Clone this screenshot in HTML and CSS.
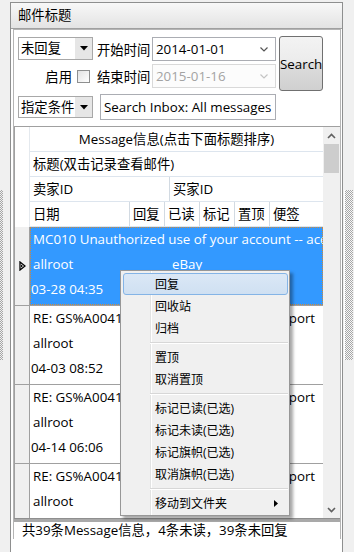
FILE: index.html
```html
<!DOCTYPE html>
<html lang="zh-CN">
<head>
    <meta charset="UTF-8">
    <meta name="viewport" content="width=device-width, initial-scale=1.0">
    <title>邮件标题</title>
    <link rel="stylesheet" href="styles.css">
</head>
<body>
<div class="app">
    <!-- Left splitter -->
    <div class="split split-left"><div class="grip"></div></div>

    <div class="panel">
        <div class="panel-head">邮件标题</div>
        <div class="panel-body">
            <div class="box">
                <!-- Filter controls -->
                <div class="filters">
                    <div class="combo c1">
                        <span class="combo-text">未回复</span>
                        <span class="combo-btn"><svg width="8" height="5" viewBox="0 0 8 5"><polygon points="0,0 8,0 4,4.5" fill="#000"/></svg></span>
                    </div>
                    <div class="label l1">开始时间</div>
                    <div class="date d1">
                        <span>2014-01-01</span>
                        <svg width="8" height="5" viewBox="0 0 8 5"><polyline points="0.5,0.5 4,4 7.5,0.5" fill="none" stroke="#555" stroke-width="1.2"/></svg>
                    </div>
                    <button class="search">Search</button>

                    <div class="enable">启用 <span class="check"></span></div>
                    <div class="label l2">结束时间</div>
                    <div class="date d2 disabled">
                        <span>2015-01-16</span>
                        <svg width="8" height="5" viewBox="0 0 8 5"><polyline points="0.5,0.5 4,4 7.5,0.5" fill="none" stroke="#c4c4c4" stroke-width="1.2"/></svg>
                    </div>

                    <div class="combo c3">
                        <span class="combo-text">指定条件</span>
                        <span class="combo-btn"><svg width="8" height="5" viewBox="0 0 8 5"><polygon points="0,0 8,0 4,4.5" fill="#000"/></svg></span>
                    </div>
                    <div class="textbox">Search Inbox: All messages</div>
                </div>

                <!-- Message grid -->
                <div class="grid">
                    <div class="grid-main">
                        <div class="heads">
                            <div class="corner"></div>
                            <div class="head-rows">
                                <div class="hrow center">Message信息(点击下面标题排序)</div>
                                <div class="hrow"><div class="hc">标题(双击记录查看邮件)</div></div>
                                <div class="hrow">
                                    <div class="hc w140 bar">卖家ID</div>
                                    <div class="hc">买家ID</div>
                                </div>
                                <div class="hrow">
                                    <div class="hc w100 bar">日期</div>
                                    <div class="hc w35 bar">回复</div>
                                    <div class="hc w35 bar">已读</div>
                                    <div class="hc w35 bar">标记</div>
                                    <div class="hc w35 bar">置顶</div>
                                    <div class="hc">便签</div>
                                </div>
                            </div>
                        </div>

                        <div class="rows">
                            <div class="drow">
                                <div class="rh"><svg width="7" height="10" viewBox="0 0 7 10"><polygon points="1,1 6,5 1,9" fill="#fff" stroke="#000" stroke-width="1.3"/><polygon points="2,3.5 4,5 2,6.5" fill="#000"/></svg></div>
                                <div class="dcells selected">
                                    <div class="dline title">MC010 Unauthorized use of your account -- account suspended</div>
                                    <div class="dline"><span class="seller">allroot</span><span class="buyer">eBay</span></div>
                                    <div class="dline date-cell">03-28 04:35</div>
                                </div>
                            </div>
                            <div class="drow">
                                <div class="rh"></div>
                                <div class="dcells">
                                    <div class="dline title">RE: GS%A00413 Messages from eBay Support</div>
                                    <div class="dline"><span class="seller">allroot</span><span class="buyer">eBay</span></div>
                                    <div class="dline date-cell">04-03 08:52</div>
                                </div>
                            </div>
                            <div class="drow">
                                <div class="rh"></div>
                                <div class="dcells">
                                    <div class="dline title">RE: GS%A00418 Messages from eBay Support</div>
                                    <div class="dline"><span class="seller">allroot</span><span class="buyer">eBay</span></div>
                                    <div class="dline date-cell">04-14 06:06</div>
                                </div>
                            </div>
                            <div class="drow">
                                <div class="rh"></div>
                                <div class="dcells">
                                    <div class="dline title">RE: GS%A00415 Messages from eBay Support</div>
                                    <div class="dline"><span class="seller">allroot</span><span class="buyer">eBay</span></div>
                                    <div class="dline date-cell">04-16 11:20</div>
                                </div>
                            </div>
                        </div>
                    </div>

                    <div class="vscroll">
                        <div class="sbtn"><svg width="9" height="6" viewBox="0 0 9 6"><polyline points="1,5 4.5,1.5 8,5" fill="none" stroke="#606060" stroke-width="1.6"/></svg></div>
                        <div class="thumb"></div>
                        <div class="track"></div>
                        <div class="sbtn"><svg width="9" height="6" viewBox="0 0 9 6"><polyline points="1,1 4.5,4.5 8,1" fill="none" stroke="#606060" stroke-width="1.6"/></svg></div>
                    </div>
                </div>

                <div class="hsplit"></div>
                <div class="status">共39条Message信息，4条未读，39条未回复</div>
            </div>
        </div>
    </div>

    <!-- Right splitter -->
    <div class="split split-right"><div class="grip"></div></div>

    <!-- Row context menu -->
    <div class="menu">
        <div class="mi hot">回复</div>
        <div class="mi">回收站</div>
        <div class="mi">归档</div>
        <div class="sep"></div>
        <div class="mi">置顶</div>
        <div class="mi">取消置顶</div>
        <div class="sep"></div>
        <div class="mi">标记已读(已选)</div>
        <div class="mi">标记未读(已选)</div>
        <div class="mi">标记旗帜(已选)</div>
        <div class="mi">取消旗帜(已选)</div>
        <div class="sep"></div>
        <div class="mi sub">移动到文件夹 <svg width="4" height="7" viewBox="0 0 4 7"><polygon points="0,0 4,3.5 0,7" fill="#000"/></svg></div>
    </div>
</div>
</body>
</html>
```

FILE: styles.css
```css
* {
    box-sizing: border-box;
}
body {
    margin: 0;
    font-family: "Open Sans", "Noto Sans CJK SC", sans-serif;
    font-size: 13.33px;
    color: #000;
    background: #f0f0f0;
}
.app {
    position: relative;
    display: flex;
    width: 354px;
    height: 552px;
    overflow: hidden;
}

/* splitters */
.split-left {
    width: 10px;
}
.split-right {
    width: 11px;
}
.grip {
    height: 170px;
    margin-top: 190px;
    background: conic-gradient(#a6a6a6 25%, transparent 0 50%, #a6a6a6 0 75%, transparent 0) 0 0 / 2px 2px;
}
.split-left .grip {
    width: 3px;
    margin-left: 0;
}
.split-right .grip {
    width: 9px;
    margin-left: 1px;
    border-left: 1px solid #fff;
    background-color: #f7f7f7;
}

/* panel */
.panel {
    width: 333px;
    height: 560px;
    margin-top: 2px;
    border: 1px solid #8e8f8f;
    background: #fff;
}
.panel-head {
    height: 26px;
    padding-left: 7px;
    line-height: 25px;
    background: linear-gradient(#f8f8f8, #e3e3e3);
    border-bottom: 1px solid #a0a0a0;
}
.panel-body {
    padding: 0 1px 0 2px;
}
.box {
    border: 1px solid #b5b5b5;
    border-bottom: none;
}

/* filters */
.filters {
    display: grid;
    grid-template-columns: 75px 59px 124px 47px;
    grid-template-rows: 24px 3px 24px 6px 26px;
    padding: 7px 0 6px 4px;
}
.combo {
    display: flex;
    border: 1px solid #a8a8a8;
    background: #fff;
}
.c1 {
    grid-row: 1;
    grid-column: 1;
    height: 23px;
}
.c3 {
    grid-row: 5;
    grid-column: 1;
    height: 22px;
    align-self: center;
}
.combo-text {
    flex: 1;
    padding-left: 2px;
    line-height: 20px;
}
.combo-btn {
    display: flex;
    align-items: center;
    justify-content: center;
    width: 17px;
    background: #e6e6e6;
}
.label {
    grid-column: 2;
    padding-left: 4px;
    align-self: center;
}
.l1 {
    grid-row: 1;
}
.l2 {
    grid-row: 3;
}
.date {
    grid-column: 3;
    display: flex;
    align-items: center;
    justify-content: space-between;
    padding: 0 7px 0 3px;
    border: 1px solid #abadb3;
    background: #fff;
}
.d1 {
    grid-row: 1;
}
.d2 {
    grid-row: 3;
}
.date.disabled {
    color: #a3a3a3;
    border-color: #d9d9d9;
    background: #fcfcfc;
}
.search {
    grid-column: 4;
    grid-row: 1 / 4;
    margin: -1px 0 -3px 3px;
    padding: 0;
    font: inherit;
    color: #000;
    border: 1px solid #707070;
    border-radius: 3px;
    background: linear-gradient(#f3f3f3, #ebebeb 50%, #dddddd 50%, #d0d0d0);
}
.enable {
    grid-row: 3;
    grid-column: 1;
    display: flex;
    align-items: center;
    justify-content: flex-end;
    gap: 5px;
    padding-right: 3px;
}
.check {
    width: 13px;
    height: 13px;
    border: 1px solid #8e8f8f;
    background: linear-gradient(135deg, #e2e2e2, #fff);
}
.textbox {
    grid-row: 5;
    grid-column: 2 / 4;
    margin-left: 7px;
    padding-left: 3px;
    line-height: 24px;
    white-space: nowrap;
    overflow: hidden;
    border: 1px solid #abadb3;
}

/* grid */
.grid {
    display: flex;
    height: 392px;
    border-top: 1px solid #a0a0a0;
    border-left: 1px solid #a0a0a0;
}
.grid-main {
    width: 308px;
    overflow: hidden;
}
.heads {
    display: flex;
}
.corner {
    width: 15px;
    border-right: 1px solid #e4e9ee;
}
.head-rows {
    width: 293px;
}
.hrow {
    display: flex;
    height: 25px;
    line-height: 24px;
    border-bottom: 1px solid #dde5ee;
}
.hrow.center {
    justify-content: center;
}
.hc {
    padding-left: 3px;
    white-space: nowrap;
}
.hc.bar {
    border-right: 1px solid #d2dae2;
}
.w140 {
    width: 140px;
}
.w100 {
    width: 100px;
}
.w35 {
    width: 35px;
}
.rows {
    height: 291px;
    overflow: hidden;
}
.drow {
    display: flex;
    height: 79px;
    border-bottom: 1px solid #a0a0a0;
}
.rh {
    display: flex;
    align-items: center;
    justify-content: center;
    width: 15px;
    background: #f0f0f0;
    border-right: 1px solid #a0a0a0;
}
.dcells {
    width: 293px;
    line-height: 25px;
    background: #fff;
}
.dcells.selected {
    color: #fff;
    background: #3399ff;
    outline: 1px dotted #d08a3a;
    outline-offset: -1px;
}
.dline {
    display: flex;
    height: 25px;
    white-space: nowrap;
    overflow: hidden;
}
.title {
    padding-left: 3px;
}
.seller {
    width: 140px;
    padding-left: 3px;
}
.buyer {
    padding-left: 2px;
}
.date-cell {
    padding-left: 1px;
}

/* scrollbar */
.vscroll {
    display: flex;
    flex-direction: column;
    width: 17px;
    background: #f0f0f0;
}
.sbtn {
    display: flex;
    align-items: center;
    justify-content: center;
    height: 17px;
}
.thumb {
    height: 29px;
    margin: 0 1px;
    background: #cdcdcd;
}
.track {
    flex: 1;
}

/* status bar */
.hsplit {
    height: 4px;
    background: #a9a9a9;
    border-top: 1px solid #8f8f8f;
}
.status {
    padding-left: 8px;
    line-height: 17px;
}

/* context menu */
.menu {
    position: absolute;
    left: 120px;
    top: 270px;
    width: 170px;
    padding: 2px 1px 1px 2px;
    font-size: 12px;
    border: 1px solid #979797;
    background: linear-gradient(90deg, transparent 29px, #e2e3e3 29px 30px, #fff 30px 31px, transparent 31px), #f0f0f0;
    box-shadow: 3px 3px 3px rgba(0, 0, 0, 0.35);
}
.mi {
    display: flex;
    align-items: center;
    justify-content: space-between;
    height: 22px;
    padding: 0 9px 0 31px;
    border: 1px solid transparent;
    border-radius: 3px;
}
.mi.hot {
    background: linear-gradient(#dbe8f6, #cfe0f2);
    border-color: #84b4e6;
}
.sep {
    height: 7px;
    margin-left: 27px;
    background: linear-gradient(transparent 3px, #d7d7d7 3px 4px, #fff 4px 5px, transparent 5px);
}
```
